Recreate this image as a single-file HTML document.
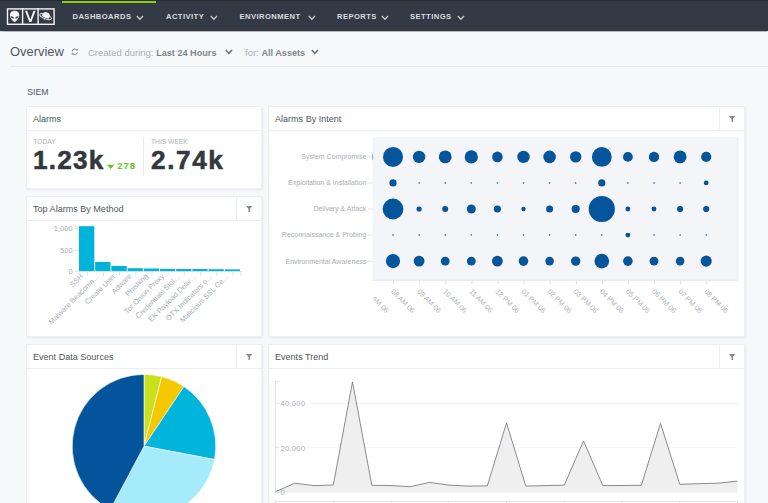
<!DOCTYPE html>
<html><head><meta charset="utf-8">
<style>
*{margin:0;padding:0;box-sizing:border-box}
html,body{width:768px;height:503px;overflow:hidden;background:#f7f8fa;font-family:"Liberation Sans",sans-serif;position:relative}
.a{position:absolute;white-space:nowrap}
#nav{position:absolute;left:0;top:0;width:768px;height:31px;background:#343a45;border-top:1px solid #272c34;box-shadow:0 0.5px 1px rgba(0,0,0,0.25)}
#nav .green{position:absolute;left:62px;top:0px;width:94px;height:2px;background:#8fd000}
.nv{position:absolute;top:11px;font-size:7.6px;font-weight:bold;color:#d8dce1;letter-spacing:0.45px;line-height:10px}
.chev{position:absolute;top:13px;width:5px;height:5px;border-right:1.4px solid #c9cdd3;border-bottom:1.4px solid #c9cdd3;transform:rotate(45deg)}
.panel{position:absolute;background:#fff;border:1px solid #eceef1;box-shadow:0.5px 1px 2px rgba(20,30,50,0.07)}
.ph{position:absolute;left:0;top:0;right:0;height:24px;border-bottom:1px solid #eceef1}
.pt{position:absolute;left:6px;top:6.8px;font-size:9.05px;color:#50565d;line-height:11px}
.flt{position:absolute;right:0;top:0;width:25px;height:23px;border-left:1px solid #eceef1}
.flt svg{position:absolute;left:9px;top:8.6px}
.gl{font-size:7px;fill:#a9aeb4;font-family:"Liberation Sans",sans-serif}
</style></head><body>
<div id="nav">
  <div class="green"></div>
  <svg class="a" style="left:6px;top:5px" width="50" height="20" viewBox="0 0 50 20">
    <rect x="1.5" y="2.9" width="46.6" height="15.4" fill="none" stroke="#f4f4f4" stroke-width="1.4"/>
    <line x1="16.6" y1="2" x2="16.6" y2="18.6" stroke="#f4f4f4" stroke-width="1.4"/>
    <line x1="32.1" y1="2" x2="32.1" y2="18.6" stroke="#f4f4f4" stroke-width="1.4"/>
    <path d="M8.6 4.7 C12.1 4.7 13.4 7 13.2 9.4 C13 12 10.6 15 8.6 16.2 C6.6 15 4.2 12 4 9.4 C3.8 7 5.1 4.7 8.6 4.7Z" fill="#f4f4f4"/>
    <path d="M4.7 10.3 C6.2 10.1 7.9 11 8.1 12.6 C6.5 12.7 5.1 11.8 4.7 10.3Z M12.5 10.3 C11 10.1 9.3 11 9.1 12.6 C10.7 12.7 12.1 11.8 12.5 10.3Z" fill="#343b46"/>
    <path d="M19 4.7 L21.1 4.7 L24.3 13.4 L27.5 4.7 L29.6 4.7 L25.3 16 L23.3 16Z" fill="#f4f4f4"/>
    <g transform="translate(39.6 10.6) rotate(22)">
      <ellipse cx="0" cy="0" rx="6.1" ry="2.1" fill="none" stroke="#f4f4f4" stroke-width="0.9"/>
      <circle cx="0" cy="-0.6" r="3.9" fill="#f4f4f4"/>
      <path d="M-6.1 0 A6.1 2.1 0 0 0 6.1 0" fill="none" stroke="#343b46" stroke-width="1.8"/>
      <path d="M-6.1 0 A6.1 2.1 0 0 0 6.1 0" fill="none" stroke="#f4f4f4" stroke-width="0.9"/>
    </g>
  </svg>
  <div class="nv" style="left:72.5px">DASHBOARDS</div><svg class="a" style="left:136px;top:13.8px" width="8" height="6" viewBox="0 0 8 6"><path d="M0.8 1 L3.9 4.3 L7 1" fill="none" stroke="#c5c9cf" stroke-width="1.3"/></svg>
  <div class="nv" style="left:166px">ACTIVITY</div><svg class="a" style="left:210px;top:13.8px" width="8" height="6" viewBox="0 0 8 6"><path d="M0.8 1 L3.9 4.3 L7 1" fill="none" stroke="#c5c9cf" stroke-width="1.3"/></svg>
  <div class="nv" style="left:239.5px">ENVIRONMENT</div><svg class="a" style="left:307.5px;top:13.8px" width="8" height="6" viewBox="0 0 8 6"><path d="M0.8 1 L3.9 4.3 L7 1" fill="none" stroke="#c5c9cf" stroke-width="1.3"/></svg>
  <div class="nv" style="left:337px">REPORTS</div><svg class="a" style="left:381px;top:13.8px" width="8" height="6" viewBox="0 0 8 6"><path d="M0.8 1 L3.9 4.3 L7 1" fill="none" stroke="#c5c9cf" stroke-width="1.3"/></svg>
  <div class="nv" style="left:410px">SETTINGS</div><svg class="a" style="left:457.2px;top:13.8px" width="8" height="6" viewBox="0 0 8 6"><path d="M0.8 1 L3.9 4.3 L7 1" fill="none" stroke="#c5c9cf" stroke-width="1.3"/></svg>
</div>

<!-- overview bar -->
<div class="a" style="left:10px;top:43.5px;font-size:12.9px;color:#51575f;line-height:15px">Overview</div>
<svg class="a" style="left:70.5px;top:47.7px" width="7.6" height="7.6" viewBox="0 0 9 9"><path d="M1.3 4 A3.2 3.2 0 0 1 7.3 3" fill="none" stroke="#8a9098" stroke-width="1.2"/><path d="M7.7 5 A3.2 3.2 0 0 1 1.7 6" fill="none" stroke="#8a9098" stroke-width="1.2"/><path d="M5.8 1.8 L8 3.4 L8.2 0.8Z M3.2 7.2 L1 5.6 L0.8 8.2Z" fill="#8a9098"/></svg>
<div class="a" style="left:88px;top:46.5px;font-size:9.5px;color:#a9aeb4;line-height:11px">Created during: <b style="color:#80868d;font-size:9.15px">Last 24 Hours</b></div>
<svg class="a" style="left:224.5px;top:48.5px" width="8" height="6" viewBox="0 0 8 6"><path d="M0.8 1 L3.9 4.3 L7 1" fill="none" stroke="#6c737b" stroke-width="1.6"/></svg>
<div class="a" style="left:245px;top:46.5px;font-size:9.5px;color:#a9aeb4;line-height:11px">for: <b style="color:#80868d;font-size:9.15px">All Assets</b></div>
<svg class="a" style="left:310.5px;top:48.5px" width="8" height="6" viewBox="0 0 8 6"><path d="M0.8 1 L3.9 4.3 L7 1" fill="none" stroke="#6c737b" stroke-width="1.6"/></svg>
<div class="a" style="left:10px;top:66px;width:758px;height:1px;background:#e8eaee"></div>

<div class="a" style="left:27.3px;top:86.5px;font-size:8.7px;color:#51575e;line-height:10px">SIEM</div>

<!-- Alarms panel -->
<div class="panel" style="left:26px;top:106px;width:236px;height:83px">
  <div class="ph"><div class="pt">Alarms</div></div>
</div>

<!-- Top alarms panel -->
<div class="panel" style="left:26px;top:196px;width:236px;height:141px">
  <div class="ph" style="height:24px"><div class="pt">Top Alarms By Method</div><div class="flt"><svg width="6.4" height="6.6" viewBox="0 0 7 7"><path d="M0 0 H7 L4.3 3 V6.6 H2.7 V3Z" fill="#80868d"/></svg></div></div>
</div>

<!-- Alarms by intent -->
<div class="panel" style="left:268px;top:106px;width:477px;height:231px">
  <div class="ph"><div class="pt">Alarms By Intent</div><div class="flt"><svg width="6.4" height="6.6" viewBox="0 0 7 7"><path d="M0 0 H7 L4.3 3 V6.6 H2.7 V3Z" fill="#80868d"/></svg></div></div>
</div>

<!-- Event data sources -->
<div class="panel" style="left:26px;top:344px;width:236px;height:170px">
  <div class="ph"><div class="pt">Event Data Sources</div><div class="flt"><svg width="6.4" height="6.6" viewBox="0 0 7 7"><path d="M0 0 H7 L4.3 3 V6.6 H2.7 V3Z" fill="#80868d"/></svg></div></div>
</div>

<!-- Events trend -->
<div class="panel" style="left:268px;top:344px;width:477px;height:170px">
  <div class="ph"><div class="pt">Events Trend</div><div class="flt"><svg width="6.4" height="6.6" viewBox="0 0 7 7"><path d="M0 0 H7 L4.3 3 V6.6 H2.7 V3Z" fill="#80868d"/></svg></div></div>
</div>

<svg style="position:absolute;left:0;top:0" width="768" height="503" viewBox="0 0 768 503">
<defs><clipPath id="bc"><rect x="372.5" y="100" width="366" height="250"/></clipPath><clipPath id="lc"><rect x="373.6" y="100" width="366" height="250"/></clipPath><clipPath id="pc"><rect x="27" y="368" width="234" height="140"/></clipPath></defs>
<text x="33.3" y="143.8" font-size="6.7" fill="#abb0b6" font-family="Liberation Sans, sans-serif">TODAY</text>
<text x="151" y="143.8" font-size="6.7" fill="#abb0b6" font-family="Liberation Sans, sans-serif">THIS WEEK</text>
<text x="33" y="169.4" font-size="26.2" font-weight="bold" fill="#33383f" stroke="#33383f" stroke-width="0.55" letter-spacing="1.2" font-family="Liberation Sans, sans-serif">1.23k</text>
<text x="151" y="169.4" font-size="26.2" font-weight="bold" fill="#33383f" stroke="#33383f" stroke-width="0.55" letter-spacing="1.6" font-family="Liberation Sans, sans-serif">2.74k</text>
<path d="M106.8 164.7 H114.6 L110.7 169Z" fill="#6cc52b"/>
<text x="117.2" y="169.4" font-size="9.7" font-weight="bold" fill="#6cc52b" letter-spacing="0.9" font-family="Liberation Sans, sans-serif">278</text>
<rect x="143" y="137" width="1" height="39" fill="#e8eaed"/>
<rect x="79.00" y="226.2" width="15.29" height="45.00" fill="#00b3db"/>
<rect x="95.19" y="262" width="15.29" height="9.20" fill="#00b3db"/>
<rect x="111.38" y="265.9" width="15.29" height="5.30" fill="#00b3db"/>
<rect x="127.57" y="268.2" width="15.29" height="3.00" fill="#00b3db"/>
<rect x="143.76" y="268.5" width="15.29" height="2.70" fill="#00b3db"/>
<rect x="159.95" y="268.9" width="15.29" height="2.30" fill="#00b3db"/>
<rect x="176.14" y="269" width="15.29" height="2.20" fill="#00b3db"/>
<rect x="192.33" y="269" width="15.29" height="2.20" fill="#00b3db"/>
<rect x="208.52" y="269.2" width="15.29" height="2.00" fill="#00b3db"/>
<rect x="224.71" y="269.4" width="15.29" height="1.80" fill="#00b3db"/>
<rect x="78.5" y="271.2" width="163" height="0.8" fill="#d8dce0"/>
<rect x="86.80" y="271.2" width="0.8" height="4.5" fill="#d8dce0"/>
<rect x="102.98" y="271.2" width="0.8" height="4.5" fill="#d8dce0"/>
<rect x="119.17" y="271.2" width="0.8" height="4.5" fill="#d8dce0"/>
<rect x="135.37" y="271.2" width="0.8" height="4.5" fill="#d8dce0"/>
<rect x="151.55" y="271.2" width="0.8" height="4.5" fill="#d8dce0"/>
<rect x="167.74" y="271.2" width="0.8" height="4.5" fill="#d8dce0"/>
<rect x="183.94" y="271.2" width="0.8" height="4.5" fill="#d8dce0"/>
<rect x="200.12" y="271.2" width="0.8" height="4.5" fill="#d8dce0"/>
<rect x="216.31" y="271.2" width="0.8" height="4.5" fill="#d8dce0"/>
<rect x="232.50" y="271.2" width="0.8" height="4.5" fill="#d8dce0"/>
<rect x="240.6" y="271.2" width="0.8" height="4.5" fill="#d8dce0"/>
<text x="72.6" y="231.1" font-size="7.5" fill="#a9aeb4" text-anchor="end" font-family="Liberation Sans, sans-serif">1,000</text>
<rect x="74.8" y="228.2" width="3.8" height="0.8" fill="#d8dce0"/>
<text x="72.6" y="252.9" font-size="7.5" fill="#a9aeb4" text-anchor="end" font-family="Liberation Sans, sans-serif">500</text>
<rect x="74.8" y="250.0" width="3.8" height="0.8" fill="#d8dce0"/>
<text x="72.6" y="274.0" font-size="7.5" fill="#a9aeb4" text-anchor="end" font-family="Liberation Sans, sans-serif">0</text>
<rect x="74.8" y="271.1" width="3.8" height="0.8" fill="#d8dce0"/>
<rect x="74.8" y="225.8" width="3.8" height="0.8" fill="#d8dce0"/>
<text transform="translate(83.59 276.7) rotate(-45)" font-size="7.4" fill="#a9aeb4" text-anchor="end" font-family="Liberation Sans, sans-serif">SSH</text>
<text transform="translate(99.78 276.7) rotate(-45)" font-size="7.4" fill="#a9aeb4" text-anchor="end" font-family="Liberation Sans, sans-serif">Malware Beaconin…</text>
<text transform="translate(115.97 276.7) rotate(-45)" font-size="7.4" fill="#a9aeb4" text-anchor="end" font-family="Liberation Sans, sans-serif">Create User</text>
<text transform="translate(132.17 276.7) rotate(-45)" font-size="7.4" fill="#a9aeb4" text-anchor="end" font-family="Liberation Sans, sans-serif">Adware</text>
<text transform="translate(148.35 276.7) rotate(-45)" font-size="7.4" fill="#a9aeb4" text-anchor="end" font-family="Liberation Sans, sans-serif">Phishing</text>
<text transform="translate(164.54 276.7) rotate(-45)" font-size="7.4" fill="#a9aeb4" text-anchor="end" font-family="Liberation Sans, sans-serif">Tor Onion Proxy</text>
<text transform="translate(180.74 276.7) rotate(-45)" font-size="7.4" fill="#a9aeb4" text-anchor="end" font-family="Liberation Sans, sans-serif">Credentials Stol…</text>
<text transform="translate(196.93 276.7) rotate(-45)" font-size="7.4" fill="#a9aeb4" text-anchor="end" font-family="Liberation Sans, sans-serif">EK Payload Deliv…</text>
<text transform="translate(213.12 276.7) rotate(-45)" font-size="7.4" fill="#a9aeb4" text-anchor="end" font-family="Liberation Sans, sans-serif">OTX Indicators o…</text>
<text transform="translate(229.31 276.7) rotate(-45)" font-size="7.4" fill="#a9aeb4" text-anchor="end" font-family="Liberation Sans, sans-serif">Malicious SSL Ce…</text>
<rect x="372.5" y="136.6" width="365.7" height="144" fill="#f3f5f8"/>
<rect x="372.5" y="279.8" width="365.7" height="0.9" fill="#e3e6ea"/>
<rect x="737.5" y="136.6" width="0.8" height="143.3" fill="#eceef2"/>
<g clip-path="url(#bc)" fill="#04559b">
<circle cx="366.7" cy="156.90" r="6.5"/>
<circle cx="393.00" cy="156.90" r="10"/>
<circle cx="419.10" cy="156.90" r="6.2"/>
<circle cx="445.20" cy="156.90" r="6.4"/>
<circle cx="471.30" cy="156.90" r="6.6"/>
<circle cx="497.40" cy="156.90" r="5.3"/>
<circle cx="523.50" cy="156.90" r="6.2"/>
<circle cx="549.60" cy="156.90" r="6.3"/>
<circle cx="575.70" cy="156.90" r="5.7"/>
<circle cx="601.80" cy="156.90" r="9.9"/>
<circle cx="627.90" cy="156.90" r="4.9"/>
<circle cx="654.00" cy="156.90" r="5.2"/>
<circle cx="680.10" cy="156.90" r="6.4"/>
<circle cx="706.20" cy="156.90" r="5.1"/>
<circle cx="366.7" cy="182.95" r="0"/>
<circle cx="393.00" cy="182.95" r="3.6"/>
<circle cx="419.10" cy="182.95" r="0.8"/>
<circle cx="445.20" cy="182.95" r="0.8"/>
<circle cx="471.30" cy="182.95" r="0.8"/>
<circle cx="497.40" cy="182.95" r="0.8"/>
<circle cx="523.50" cy="182.95" r="0.8"/>
<circle cx="549.60" cy="182.95" r="0.8"/>
<circle cx="575.70" cy="182.95" r="0.8"/>
<circle cx="601.80" cy="182.95" r="3.6"/>
<circle cx="627.90" cy="182.95" r="0.8"/>
<circle cx="654.00" cy="182.95" r="0.8"/>
<circle cx="680.10" cy="182.95" r="0.8"/>
<circle cx="706.20" cy="182.95" r="2.4"/>
<circle cx="366.7" cy="209.00" r="0"/>
<circle cx="393.00" cy="209.00" r="10.4"/>
<circle cx="419.10" cy="209.00" r="2.6"/>
<circle cx="445.20" cy="209.00" r="3.0"/>
<circle cx="471.30" cy="209.00" r="4.5"/>
<circle cx="497.40" cy="209.00" r="3.6"/>
<circle cx="523.50" cy="209.00" r="2.2"/>
<circle cx="549.60" cy="209.00" r="3.5"/>
<circle cx="575.70" cy="209.00" r="4.1"/>
<circle cx="601.80" cy="209.00" r="13.1"/>
<circle cx="627.90" cy="209.00" r="2.4"/>
<circle cx="654.00" cy="209.00" r="2.4"/>
<circle cx="680.10" cy="209.00" r="3.1"/>
<circle cx="706.20" cy="209.00" r="3.1"/>
<circle cx="366.7" cy="235.05" r="0"/>
<circle cx="393.00" cy="235.05" r="0.8"/>
<circle cx="419.10" cy="235.05" r="0.8"/>
<circle cx="445.20" cy="235.05" r="0.8"/>
<circle cx="471.30" cy="235.05" r="0.8"/>
<circle cx="497.40" cy="235.05" r="0.8"/>
<circle cx="523.50" cy="235.05" r="0.8"/>
<circle cx="549.60" cy="235.05" r="0.8"/>
<circle cx="575.70" cy="235.05" r="0.8"/>
<circle cx="601.80" cy="235.05" r="0.8"/>
<circle cx="627.90" cy="235.05" r="2.4"/>
<circle cx="654.00" cy="235.05" r="0.8"/>
<circle cx="680.10" cy="235.05" r="0.8"/>
<circle cx="706.20" cy="235.05" r="0.8"/>
<circle cx="366.7" cy="261.10" r="0"/>
<circle cx="393.00" cy="261.10" r="7.1"/>
<circle cx="419.10" cy="261.10" r="5.4"/>
<circle cx="445.20" cy="261.10" r="4.45"/>
<circle cx="471.30" cy="261.10" r="4.45"/>
<circle cx="497.40" cy="261.10" r="5.4"/>
<circle cx="523.50" cy="261.10" r="4.8"/>
<circle cx="549.60" cy="261.10" r="4.3"/>
<circle cx="575.70" cy="261.10" r="4.7"/>
<circle cx="601.80" cy="261.10" r="7.35"/>
<circle cx="627.90" cy="261.10" r="4.8"/>
<circle cx="654.00" cy="261.10" r="4.45"/>
<circle cx="680.10" cy="261.10" r="4.3"/>
<circle cx="706.20" cy="261.10" r="5.6"/>
</g>
<text x="366.3" y="159.30" font-size="7" fill="#a9aeb4" text-anchor="end" font-family="Liberation Sans, sans-serif">System Compromise</text>
<rect x="368" y="156.50" width="4.5" height="0.8" fill="#d8dce0"/>
<text x="366.3" y="185.35" font-size="7" fill="#a9aeb4" text-anchor="end" font-family="Liberation Sans, sans-serif">Exploitation & Installation</text>
<rect x="368" y="182.55" width="4.5" height="0.8" fill="#d8dce0"/>
<text x="366.3" y="211.40" font-size="7" fill="#a9aeb4" text-anchor="end" font-family="Liberation Sans, sans-serif">Delivery & Attack</text>
<rect x="368" y="208.60" width="4.5" height="0.8" fill="#d8dce0"/>
<text x="366.3" y="237.45" font-size="7" fill="#a9aeb4" text-anchor="end" font-family="Liberation Sans, sans-serif">Reconnaissance & Probing</text>
<rect x="368" y="234.65" width="4.5" height="0.8" fill="#d8dce0"/>
<text x="366.3" y="263.50" font-size="7" fill="#a9aeb4" text-anchor="end" font-family="Liberation Sans, sans-serif">Environmental Awareness</text>
<rect x="368" y="260.70" width="4.5" height="0.8" fill="#d8dce0"/>
<g clip-path="url(#lc)">
<text transform="translate(364.50 292) rotate(45)" font-size="7.15" fill="#adb2b8" font-family="Liberation Sans, sans-serif">07 AM 06</text>
<rect x="393.20" y="280.6" width="0.8" height="3.6" fill="#d8dce0"/>
<text transform="translate(390.60 292) rotate(45)" font-size="7.15" fill="#adb2b8" font-family="Liberation Sans, sans-serif">08 AM 06</text>
<rect x="419.30" y="280.6" width="0.8" height="3.6" fill="#d8dce0"/>
<text transform="translate(416.70 292) rotate(45)" font-size="7.15" fill="#adb2b8" font-family="Liberation Sans, sans-serif">09 AM 06</text>
<rect x="445.40" y="280.6" width="0.8" height="3.6" fill="#d8dce0"/>
<text transform="translate(442.80 292) rotate(45)" font-size="7.15" fill="#adb2b8" font-family="Liberation Sans, sans-serif">10 AM 06</text>
<rect x="471.50" y="280.6" width="0.8" height="3.6" fill="#d8dce0"/>
<text transform="translate(468.90 292) rotate(45)" font-size="7.15" fill="#adb2b8" font-family="Liberation Sans, sans-serif">11 AM 06</text>
<rect x="497.60" y="280.6" width="0.8" height="3.6" fill="#d8dce0"/>
<text transform="translate(495.00 292) rotate(45)" font-size="7.15" fill="#adb2b8" font-family="Liberation Sans, sans-serif">12 PM 06</text>
<rect x="523.70" y="280.6" width="0.8" height="3.6" fill="#d8dce0"/>
<text transform="translate(521.10 292) rotate(45)" font-size="7.15" fill="#adb2b8" font-family="Liberation Sans, sans-serif">01 PM 06</text>
<rect x="549.80" y="280.6" width="0.8" height="3.6" fill="#d8dce0"/>
<text transform="translate(547.20 292) rotate(45)" font-size="7.15" fill="#adb2b8" font-family="Liberation Sans, sans-serif">02 PM 06</text>
<rect x="575.90" y="280.6" width="0.8" height="3.6" fill="#d8dce0"/>
<text transform="translate(573.30 292) rotate(45)" font-size="7.15" fill="#adb2b8" font-family="Liberation Sans, sans-serif">03 PM 06</text>
<rect x="602.00" y="280.6" width="0.8" height="3.6" fill="#d8dce0"/>
<text transform="translate(599.40 292) rotate(45)" font-size="7.15" fill="#adb2b8" font-family="Liberation Sans, sans-serif">04 PM 06</text>
<rect x="628.10" y="280.6" width="0.8" height="3.6" fill="#d8dce0"/>
<text transform="translate(625.50 292) rotate(45)" font-size="7.15" fill="#adb2b8" font-family="Liberation Sans, sans-serif">05 PM 06</text>
<rect x="654.20" y="280.6" width="0.8" height="3.6" fill="#d8dce0"/>
<text transform="translate(651.60 292) rotate(45)" font-size="7.15" fill="#adb2b8" font-family="Liberation Sans, sans-serif">06 PM 06</text>
<rect x="680.30" y="280.6" width="0.8" height="3.6" fill="#d8dce0"/>
<text transform="translate(677.70 292) rotate(45)" font-size="7.15" fill="#adb2b8" font-family="Liberation Sans, sans-serif">07 PM 06</text>
<rect x="706.40" y="280.6" width="0.8" height="3.6" fill="#d8dce0"/>
<text transform="translate(703.80 292) rotate(45)" font-size="7.15" fill="#adb2b8" font-family="Liberation Sans, sans-serif">08 PM 06</text>
</g>
<g clip-path="url(#pc)">
<path d="M144.0 446.2 L144.00 374.40 A71.8 71.8 0 0 1 161.73 376.62 Z" fill="#c9e01e" stroke="#fff" stroke-width="0.6" stroke-linejoin="round"/>
<path d="M144.0 446.2 L161.73 376.62 A71.8 71.8 0 0 1 183.94 386.54 Z" fill="#f5c800" stroke="#fff" stroke-width="0.6" stroke-linejoin="round"/>
<path d="M144.0 446.2 L183.94 386.54 A71.8 71.8 0 0 1 214.55 459.53 Z" fill="#00b4dc" stroke="#fff" stroke-width="0.6" stroke-linejoin="round"/>
<path d="M144.0 446.2 L214.55 459.53 A71.8 71.8 0 0 1 110.29 509.60 Z" fill="#a5ebfc" stroke="#fff" stroke-width="0.6" stroke-linejoin="round"/>
<path d="M144.0 446.2 L110.29 509.60 A71.8 71.8 0 0 1 144.00 374.40 Z" fill="#03549a" stroke="#fff" stroke-width="0.6" stroke-linejoin="round"/>
</g>
<rect x="275.5" y="403.2" width="462" height="0.8" fill="#eef0f2"/>
<rect x="275.5" y="447.4" width="462" height="0.8" fill="#eef0f2"/>
<rect x="275.5" y="491.6" width="462" height="0.8" fill="#eef0f2"/>
<path d="M275.5 491.7 L294.8 483.2 L314.0 485.6 L333.3 485.0 L352.5 381.9 L371.8 485.3 L391.0 485.5 L410.3 486.7 L429.5 482.4 L448.8 485.1 L468.0 486.1 L487.3 485.9 L506.5 422.9 L525.8 486.1 L545.0 485.6 L564.3 485.1 L583.5 440.9 L602.8 485.6 L622.0 485.5 L641.3 485.3 L660.5 423.4 L679.8 484.3 L699.0 483.7 L718.3 483.2 L737.5 481.1 L737.5 492.5 L275.5 492.5Z" fill="#efeff0"/>
<path d="M275.5 491.7 L294.8 483.2 L314.0 485.6 L333.3 485.0 L352.5 381.9 L371.8 485.3 L391.0 485.5 L410.3 486.7 L429.5 482.4 L448.8 485.1 L468.0 486.1 L487.3 485.9 L506.5 422.9 L525.8 486.1 L545.0 485.6 L564.3 485.1 L583.5 440.9 L602.8 485.6 L622.0 485.5 L641.3 485.3 L660.5 423.4 L679.8 484.3 L699.0 483.7 L718.3 483.2 L737.5 481.1" fill="none" stroke="#737980" stroke-width="0.85" stroke-linejoin="miter"/>
<rect x="275.1" y="381" width="0.8" height="111" fill="#d8dce0"/>
<rect x="275.1" y="381" width="4" height="0.8" fill="#d8dce0"/>
<rect x="279.5" y="399.6" width="27.0" height="8" fill="#fff" opacity="1"/>
<rect x="275.1" y="403.2" width="4" height="0.8" fill="#d8dce0"/>
<text x="280.4" y="406.4" font-size="7.6" fill="#a9aeb4" letter-spacing="0.3" font-family="Liberation Sans, sans-serif">40,000</text>
<rect x="279.5" y="443.8" width="27.0" height="8" fill="#fff" opacity="1"/>
<rect x="275.1" y="447.4" width="4" height="0.8" fill="#d8dce0"/>
<text x="280.4" y="450.6" font-size="7.6" fill="#a9aeb4" letter-spacing="0.3" font-family="Liberation Sans, sans-serif">20,000</text>
<rect x="279.5" y="488.5" width="6.5" height="8" fill="#fff" opacity="0"/>
<rect x="275.1" y="492.1" width="4" height="0.8" fill="#d8dce0"/>
<text x="280.4" y="495.3" font-size="7.6" fill="#a9aeb4" letter-spacing="0.3" font-family="Liberation Sans, sans-serif">0</text>
<rect x="275.5" y="500.9" width="462" height="0.8" fill="#d8dce0"/>
<rect x="275.10" y="500.9" width="0.8" height="3" fill="#d8dce0"/>
<rect x="332.85" y="500.9" width="0.8" height="3" fill="#d8dce0"/>
<rect x="390.60" y="500.9" width="0.8" height="3" fill="#d8dce0"/>
<rect x="448.35" y="500.9" width="0.8" height="3" fill="#d8dce0"/>
<rect x="506.10" y="500.9" width="0.8" height="3" fill="#d8dce0"/>
<rect x="563.85" y="500.9" width="0.8" height="3" fill="#d8dce0"/>
<rect x="621.60" y="500.9" width="0.8" height="3" fill="#d8dce0"/>
<rect x="679.35" y="500.9" width="0.8" height="3" fill="#d8dce0"/>
<rect x="737.10" y="500.9" width="0.8" height="3" fill="#d8dce0"/>
</svg>
</body></html>
